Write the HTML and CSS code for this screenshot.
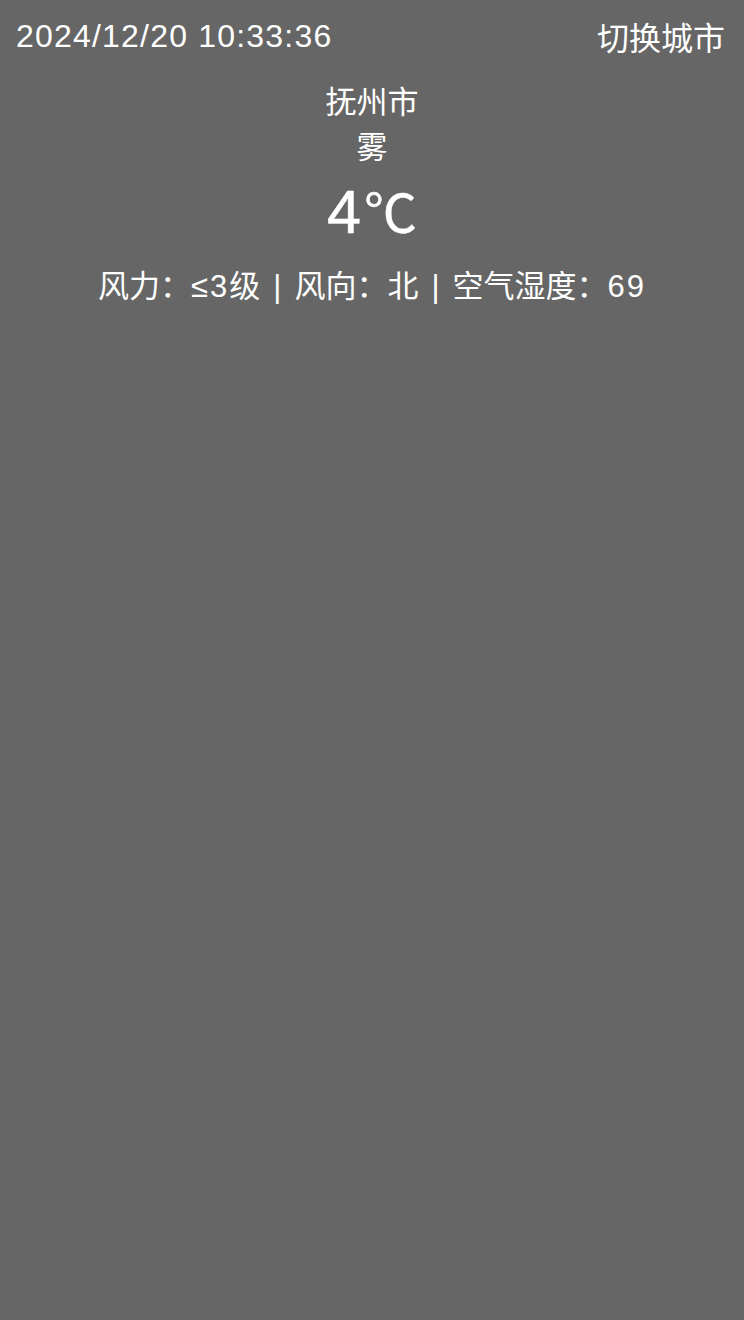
FILE: index.html
```html
<!DOCTYPE html>
<html lang="zh-CN">
<head>
<meta charset="utf-8">
<title>天气</title>
<link rel="stylesheet" href="styles.css">
</head>
<body>
<div class="page">
  <header class="topbar">
    <span class="clock">2024/12/20 10:33:36</span>
    <span class="switch">切换城市</span>
  </header>
  <main class="weather">
    <div class="city">抚州市</div>
    <div class="cond">雾</div>
    <div class="temp">4<span class="unit">℃</span></div>
    <div class="info">
      <span class="item">风力：<span class="num">≤3</span>级</span><span class="sep">|</span><span class="item">风向：北</span><span class="sep">|</span><span class="item">空气湿度：<span class="num">69</span></span>
    </div>
  </main>
</div>
</body>
</html>
```

FILE: styles.css
```css
html, body {
  margin: 0;
  padding: 0;
  background: #666666;
}

body {
  font-family: "Liberation Sans", "Noto Sans CJK SC", sans-serif;
  color: #ffffff;
}

.page {
  min-height: 1320px;
  background: #666666;
}

.topbar {
  height: 72px;
  display: flex;
  align-items: center;
  justify-content: space-between;
  padding: 0 19px 0 16px;
  font-size: 32px;
}

.clock {
  letter-spacing: 1.2px;
}

.switch {
  font-family: "Noto Sans CJK SC", sans-serif;
  font-size: 32px;
}

.weather {
  display: flex;
  flex-direction: column;
  align-items: center;
  padding-top: 5px;
}

.city,
.cond {
  font-family: "Noto Sans CJK SC", sans-serif;
  font-size: 31px;
  line-height: 45px;
}

.temp {
  margin-top: 3px;
  font-size: 61px;
  line-height: 80px;
  -webkit-text-stroke: 0.6px #ffffff;
}

.unit {
  font-family: "Noto Sans CJK SC", sans-serif;
  font-size: 53px;
  margin-left: 3px;
  -webkit-text-stroke: 0.4px #ffffff;
}

.info {
  margin-top: 15px;
  font-size: 31px;
  line-height: 40px;
  display: flex;
  align-items: center;
}

.num {
  letter-spacing: 2px;
}

.sep {
  margin: 0 13px;
}
```
